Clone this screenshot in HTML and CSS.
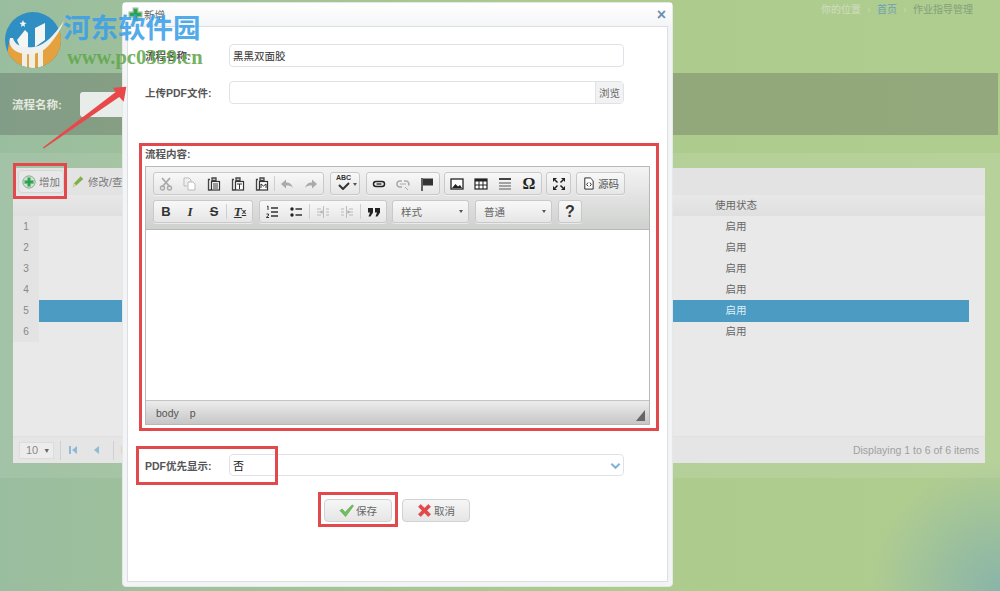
FILE: index.html
```html
<!DOCTYPE html>
<html lang="zh">
<head>
<meta charset="utf-8">
<title>作业指导管理</title>
<link rel="stylesheet" href="styles.css">
</head>
<body>
<svg class="defs" width="0" height="0">
  <defs>
    <symbol id="plus" viewBox="0 0 16 16">
      <path d="M5.5 1.2h5v4.3h4.3v5h-4.3v4.3h-5v-4.3H1.2v-5h4.3z" fill="#2fa84f" stroke="#9ab8a4" stroke-width="1.2"/>
      <path d="M6.8 3.2h2.4v3.6h3.6v2.4H9.2v3.6H6.8V9.2H3.2V6.8h3.6z" fill="#22a648"/>
    </symbol>
    <symbol id="paste" viewBox="0 0 14 14">
      <path d="M3 2.5H1.5v10.5H4M5 1h4v2.500H5z" fill="none" stroke="#444" stroke-width="1.300"/>
      <rect x="4.500" y="4.500" width="8" height="8.500" fill="#fff" stroke="#333" stroke-width="1.200"/>
    </symbol>
    <clipPath id="disc"><circle cx="29" cy="29" r="28"/></clipPath>
  </defs>
</svg>

<header class="topbar">
  <nav class="crumbs">
    <span class="crumb-first">你的位置</span><span class="crumb-sep">›</span><span class="crumb-link">首页</span><span class="crumb-sep">›</span><span class="crumb-last">作业指导管理</span>
  </nav>
</header>

<section class="search-band">
  <span class="search-label">流程名称:</span>
  <span class="search-input"></span>
</section>

<section class="content">
  <div class="panel">
    <div class="panel-tools">
      <span class="tool-btn">
        <svg class="ico16" viewBox="0 0 16 16"><circle cx="8" cy="8" r="7" fill="#d8e8dc" stroke="#6aa67c"/><use href="#plus" x="2" y="2" width="12" height="12"/></svg>增加
      </span>
      <span class="tool-plain">
        <svg class="ico16" viewBox="0 0 16 16"><path d="M2 14l1.500-4.500 7.500-8 3 3-8 7.500z" fill="#7fb04a"/><path d="M2 14l1.500-4.500 3 2.500z" fill="#d9d2a8"/></svg>修改/查看
      </span>
    </div>
    <div class="grid-row grid-head"><span></span><span></span><span class="cell-c">使用状态</span></div>
    <div class="grid-body">
      <div class="grid-row"><span class="num">1</span><span></span><span class="cell-c">启用</span></div>
      <div class="grid-row"><span class="num">2</span><span></span><span class="cell-c">启用</span></div>
      <div class="grid-row"><span class="num">3</span><span></span><span class="cell-c">启用</span></div>
      <div class="grid-row"><span class="num">4</span><span></span><span class="cell-c">启用</span></div>
      <div class="grid-row selected"><span class="num">5</span><span class="sel"></span><span class="cell-c sel">启用</span><span class="sel"></span></div>
      <div class="grid-row"><span class="num">6</span><span></span><span class="cell-c">启用</span></div>
    </div>
    <div class="pager">
      <span class="page-size">10 <i class="tri">▼</i></span>
      <span class="page-sep"></span>
      <svg class="page-ico" viewBox="0 0 12 12"><path d="M2 2h2v8H2zM10 2v8L5 6z" fill="#8fbad6"/></svg>
      <svg class="page-ico" viewBox="0 0 12 12"><path d="M9 2v8L4 6z" fill="#8fbad6"/></svg>
      <span class="page-sep"></span>
      <span class="page-text">Page</span>
      <span class="page-info">Displaying 1 to 6 of 6 items</span>
    </div>
  </div>
</section>

<div class="dialog">
  <div class="dialog-head">
    <svg class="head-ico" viewBox="0 0 16 16"><use href="#plus"/></svg>
    <span class="dialog-title">新增</span>
    <span class="dialog-close">×</span>
  </div>
  <div class="dialog-body">
    <div class="form-row first">
      <label class="form-label">流程名称:</label>
      <span class="field field-text">黑黑双面胶</span>
    </div>
    <div class="form-row second">
      <label class="form-label">上传PDF文件:</label>
      <span class="field field-file"><span class="browse">浏览</span></span>
    </div>

    <div class="mark-box">
      <div class="content-label">流程内容:</div>
      <div class="editor">
        <div class="ed-toolbar">
          <div class="ed-line">
            <div class="ed-group">
              <span class="ed-btn dim"><svg viewBox="0 0 14 14"><path d="M3 1l8 9M11 1L3 10" stroke="#aaa" stroke-width="1.800" fill="none"/><circle cx="3.500" cy="11" r="2" fill="none" stroke="#aaa" stroke-width="1.400"/><circle cx="10.500" cy="11" r="2" fill="none" stroke="#aaa" stroke-width="1.400"/></svg></span>
              <span class="ed-btn dim"><svg viewBox="2 0 14 14"><path d="M3 1h5l2 2v2M3 1v8h3" fill="none" stroke="#bbb"/><path d="M7 5h5l2 2v6H7z" fill="#fff" stroke="#bbb"/></svg></span>
              <span class="ed-btn"><svg viewBox="0 0 14 14"><use href="#paste"/><path d="M6 7h5M6 9h5M6 11h5" stroke="#333"/></svg></span>
              <span class="ed-btn"><svg viewBox="0 0 14 14"><use href="#paste"/><path d="M6 7h5M8.500 7v5" stroke="#333"/></svg></span>
              <span class="ed-btn"><svg viewBox="0 0 14 14"><use href="#paste"/><path d="M6 11V7l2.500 2L11 7v4" fill="none" stroke="#333"/></svg></span>
              <span class="ed-sep"></span>
              <span class="ed-btn dim"><svg viewBox="0 0 14 14"><path d="M1 7l5-4.500v3c4 0 6 2 7 5.500-1.500-2-3.500-2.500-7-2.500v3z" fill="#aaa"/></svg></span>
              <span class="ed-btn dim"><svg viewBox="0 0 14 14"><path d="M13 7L8 2.500v3C4 5.500 2 7.500 1 11c1.500-2 3.500-2.500 7-2.500v3z" fill="#aaa"/></svg></span>
            </div>
            <div class="ed-group">
              <span class="ed-btn wide"><span class="abc">ABC</span><svg class="abc-check" viewBox="0 0 14 8"><path d="M2 3l4 4 6-6" fill="none" stroke="#333" stroke-width="2"/></svg><i class="caret"></i></span>
            </div>
            <div class="ed-group">
              <span class="ed-btn"><svg viewBox="0 0 14 14"><rect x="1.500" y="4.500" width="11" height="5" rx="2.500" fill="none" stroke="#222" stroke-width="1.500"/><path d="M4.500 7h5" stroke="#222" stroke-width="1.300"/></svg></span>
              <span class="ed-btn dim"><svg viewBox="0 0 14 14"><path d="M6 4H4a3 3 0 0 0 0 6h2M8 4h2a3 3 0 0 1 2.500 4.500" fill="none" stroke="#aaa" stroke-width="1.500"/><path d="M4 7h6M9 10l3 3" stroke="#aaa"/></svg></span>
              <span class="ed-btn"><svg viewBox="0 0 14 14"><path d="M2 1v13" stroke="#333" stroke-width="1.500"/><path d="M3 1.500h10v7H3z" fill="#333"/></svg></span>
            </div>
            <div class="ed-group group-tighter">
              <span class="ed-btn"><svg viewBox="0 0 14 14"><rect x="1" y="2" width="12" height="10" fill="#fff" stroke="#222" stroke-width="1.300"/><path d="M2 11l3.500-4 2.500 2.500L10 8l2 3z" fill="#222"/></svg></span>
              <span class="ed-btn"><svg viewBox="0 0 14 14"><rect x="1" y="2" width="12" height="10" fill="#fff" stroke="#222" stroke-width="1.200"/><path d="M1 2h12v2.500H1z" fill="#222"/><path d="M5 4v8M9 4v8M1 8h12" stroke="#222"/></svg></span>
              <span class="ed-btn"><svg viewBox="0 0 14 14"><path d="M1 2h12" stroke="#444" stroke-width="2"/><path d="M1 6h12M1 9h12M1 12h12" stroke="#888" stroke-width="1.300"/></svg></span>
              <span class="ed-btn omega">Ω</span>
            </div>
            <div class="ed-group group-tighter">
              <span class="ed-btn narrow"><svg viewBox="0 0 14 14"><path d="M1 1h4L1 5zM13 1v4L9 1zM1 13V9l4 4zM13 13H9l4-4z" fill="#222"/><path d="M3 3l2.500 2.500M11 3L8.500 5.500M3 11l2.500-2.500M11 11L8.500 8.500" stroke="#222" stroke-width="1.500"/></svg></span>
            </div>
            <div class="ed-group group-tight">
              <span class="ed-source"><svg viewBox="0 0 14 14"><path d="M3 1h6l3 3v9H3z" fill="#fff" stroke="#222"/><path d="M6.500 6L5 8l1.500 2M8.500 6L10 8l-1.500 2" fill="none" stroke="#222"/></svg>源码</span>
            </div>
          </div>
          <div class="ed-line">
            <div class="ed-group">
              <span class="ed-btn glyph-b">B</span>
              <span class="ed-btn glyph-i">I</span>
              <span class="ed-btn glyph-s">S</span>
              <span class="ed-sep pad"></span>
              <span class="ed-btn glyph-tx">T<sub>x</sub></span>
            </div>
            <div class="ed-group">
              <span class="ed-btn"><svg viewBox="0 0 14 14"><path d="M6 3h7M6 7h7M6 11h7" stroke="#333" stroke-width="1.500"/><path d="M2 1.500l1-.5v4" fill="none" stroke="#333"/><path d="M1.500 9h2v1.500l-2 1.500v.5h2.500" fill="none" stroke="#333"/></svg></span>
              <span class="ed-btn"><svg viewBox="0 0 14 14"><circle cx="3" cy="4" r="1.700" fill="#222"/><circle cx="3" cy="10" r="1.700" fill="#222"/><path d="M6.500 4H13M6.500 10H13" stroke="#333" stroke-width="1.600"/></svg></span>
              <span class="ed-sep spaced"></span>
              <span class="ed-btn dim"><svg viewBox="0 0 14 14"><path d="M1 4h4M1 7h4M1 10h4M10 4h3M10 7h3M10 10h3M7.500 1v12" stroke="#bbb"/><path d="M6.500 5v4L4 7z" fill="#aaa"/></svg></span>
              <span class="ed-btn dim"><svg viewBox="0 0 14 14"><path d="M1 4h3M1 7h3M1 10h3M9 4h4M9 7h4M9 10h4M6.500 1v12" stroke="#bbb"/><path d="M7.500 5v4l2.500-2z" fill="#aaa"/></svg></span>
              <span class="ed-sep spaced"></span>
              <span class="ed-btn"><svg viewBox="0 0 14 14"><path d="M1 3h5v4.500L3.500 11.500H1.500L3 7.500H1zM8 3h5v4.500L10.500 11.500H8.500L10 7.500H8z" fill="#222"/></svg></span>
            </div>
            <div class="ed-group ed-select sel-a"><span>样式</span><i class="caret"></i></div>
            <div class="ed-group ed-select sel-b"><span>普通</span><i class="caret"></i></div>
            <div class="ed-group ed-help">?</div>
          </div>
        </div>
        <div class="ed-area"></div>
        <div class="ed-foot"><span>body</span><span>p</span><i class="resize"></i></div>
      </div>
    </div>

    <div class="form-row third">
      <label class="form-label">PDF优先显示:</label>
      <span class="field field-combo">否
        <svg class="combo-arrow" viewBox="0 0 12 8"><path d="M1.500 1.500L6 6l4.500-4.500" fill="none" stroke="#7fb4da" stroke-width="2.200"/></svg>
      </span>
    </div>

    <div class="actions">
      <span class="act-btn act-save"><svg viewBox="0 0 16 16"><path d="M1 8l2.500-1.500L6.500 10 14 2l1.500 1L7 14.500z" fill="#6fc15a" stroke="#4f9a45" stroke-width=".6"/></svg>保存</span>
      <span class="act-btn act-cancel"><svg viewBox="0 0 16 16"><path d="M1.500 4L4 1.500l4 4 4-4L14.500 4l-4 4 4 4-2.500 2.500-4-4-4 4L1.500 12l4-4z" fill="#e8474a" stroke="#b83a3c" stroke-width=".5"/></svg>取消</span>
    </div>

    <span class="mark mark-pdf"></span>
    <span class="mark mark-save"></span>
  </div>
</div>

<span class="mark mark-add"></span>

<svg class="arrow" viewBox="0 0 100 80"><path d="M2 70.500L84 8 81 3 96 2 93 19 88 13.500 3 71.500z" fill="#e9484b"/></svg>

<div class="watermark">
  <svg class="wm-logo" viewBox="0 0 60 60">
    <g clip-path="url(#disc)">
      <rect width="60" height="60" fill="#2f8fc3"/>
      <path d="M6 27C14 44 38 46 59 11L60 60H0z" fill="#e5a13e"/>
      <path d="M18 40h5v20h-5zM25 40h6v20h-6zM34 38h5v22h-5z" fill="#eef0e8"/>
    </g>
    <path d="M6 27C4 34 9 40 16 42c10 3 22 1 30-9C52 26 57 18 60 10 50 24 42 34 30 36 20 37 11 35 9 27z" fill="#eef1ee"/>
    <path d="M13 29l8-10 3 3v14h-8z" fill="#f4f6f4"/>
    <path d="M31 36V17l10-5v17z" fill="#f4f6f4"/>
    <path d="M19 9l1 2.500 2.500.5-2 1.500.5 2.500-2-1.500-2 1.500.5-2.500-2-1.500 2.500-.5z" fill="#f4f4f4"/>
  </svg>
  <div class="wm-cn">河东软件园</div>
  <div class="wm-url">www.pc0359.cn</div>
</div>
</body>
</html>
```
FILE: styles.css
```css
* { box-sizing: border-box; }
html, body { height: 100%; }
body {
  margin: 0;
  width: 1000px;
  height: 591px;
  overflow: hidden;
  position: relative;
  font-family: "Liberation Sans", "Noto Sans CJK SC", sans-serif;
  font-size: 10.5px;
  color: #555;
  background:
    radial-gradient(circle at 100% 100%, #89b4a9 0, rgba(137,180,169,0) 130px),
    linear-gradient(90deg, #99bd9f 0, #a2c298 25%, #aecb8e 60%, #b0cd90 100%);
}
.defs { position: absolute; }
.topbar { height: 73px; display: flex; justify-content: flex-end; padding: 3px 27px 0 0; }
.crumbs { display: flex; height: 13px; line-height: 13px; font-size: 10px; }
.crumb-first { color: #cfdcc0; }
.crumb-link { color: #6d9fb2; }
.crumb-last { color: #81a07a; }
.crumb-sep { color: #c8d8b8; width: 16px; text-align: center; }

.search-band {
  height: 62px;
  margin-right: 2px;
  background: rgba(72,72,72,.27);
  display: flex;
  align-items: center;
  padding-left: 12px;
}
.search-label { color: #e3e9de; font-weight: bold; font-size: 11.500px; width: 68px; }
.search-input { width: 50px; height: 25px; background: #e9edea; border-radius: 3px; }

.content {
  margin-top: 18px;
  height: 325px;
  padding: 15px 15px 0 13px;
  background: rgba(255,255,255,.09);
}
.panel { height: 295px; background: #e9e9e9; display: flex; flex-direction: column; }
.panel-tools { height: 27px; background: #e3e3e3; display: flex; align-items: center; padding-left: 5px; gap: 7px; flex: none; }
.tool-btn, .tool-plain { display: flex; align-items: center; gap: 3px; height: 23px; color: #777; font-size: 10.500px; }
.tool-btn { width: 46px; padding-left: 3px; border: 1px solid #d6d6d6; border-radius: 4px; background: #e8e8e8; }
.tool-plain { white-space: nowrap; }
.ico16 { width: 14px; height: 14px; flex: none; }

.grid-row { display: grid; grid-template-columns: 26px 665px 64px 201px 1fr; height: 21px; line-height: 21px; color: #666; }
.grid-head { background: linear-gradient(#e8e8e8, #dfdfdf); flex: none; }
.grid-body { flex: 1; }
.num { background: #e3e3e3; text-align: center; color: #888; font-size: 10px; }
.cell-c { text-align: center; }
.selected .sel { background: #4b9bc3; color: #dff0f8; }
.selected .num { border-bottom: 1px solid #6fa8c8; }

.pager { height: 27px; background: #e5e5e5; border-top: 1px solid #e0e0e0; display: flex; align-items: center; padding: 0 6px 0 6px; flex: none; color: #999; }
.page-size { width: 35px; height: 17px; line-height: 15px; padding-left: 6px; border: 1px solid #dcdcdc; background: #ececec; font-size: 11px; color: #888; margin-right: 6px; }
.tri { font-style: normal; font-size: 7px; color: #666; margin-left: 2px; vertical-align: 1px; }
.page-sep { width: 1px; height: 19px; background: #d0d0d0; margin-right: 6px; }
.page-ico { width: 12px; height: 12px; margin-right: 11px; }
.page-text { font-size: 11px; color: #888; margin-left: 1px; }
.page-info { margin-left: auto; font-size: 10.500px; color: #a0a0a0; }

.dialog {
  position: absolute;
  left: 122px;
  top: 2px;
  width: 551px;
  height: 585px;
  background: #f3f4f6;
  border: 1px solid #e5e8e8;
  border-radius: 4px;
  padding: 0 4px 4px;
  display: flex;
  flex-direction: column;
}
.dialog-head { height: 23px; display: flex; align-items: center; flex: none; position: relative; background: linear-gradient(#fff, #f4f5f7); margin: 0 -4px; padding-left: 5px; }
.head-ico { width: 15px; height: 15px; }
.dialog-title { color: #666; font-size: 10.500px; margin-left: 1px; }
.dialog-close { margin-left: auto; margin-right: 6px; color: #6f8fb0; font-size: 16px; font-weight: bold; line-height: 16px; }
.dialog-body { flex: 1; background: #fff; border: 1px solid #dcdfe2; position: relative; }

.form-row { display: flex; align-items: center; padding-left: 17px; }
.form-row.first { margin-top: 17px; height: 23px; }
.form-row.second { margin-top: 14px; height: 23px; }
.form-row.third { margin-top: 23px; height: 22px; }
.form-label { width: 84px; font-weight: bold; color: #555; font-size: 10.500px; flex: none; white-space: nowrap; }
.field { width: 395px; height: 100%; border: 1px solid #dfe3e8; border-radius: 4px; background: #fff; color: #333; display: flex; align-items: center; padding-left: 3px; font-size: 10.500px; position: relative; }
.field-file { justify-content: flex-end; padding: 0; }
.browse { width: 28px; height: 100%; border-left: 1px solid #dfe3e8; background: #f2f2f2; color: #666; display: flex; align-items: center; justify-content: center; font-size: 10.500px; }
.field-combo { font-size: 11px; color: #222; }
.combo-arrow { position: absolute; right: 2px; top: 7px; width: 11px; height: 8px; }

.mark-box { margin: 39px 0 0 11px; width: 520px; height: 288px; border: 3px solid #e2494c; padding: 3px; }
.content-label { font-weight: bold; color: #555; height: 17px; line-height: 10px; padding-left: 0; }
.editor { border: 1px solid #b8b8b8; width: 505px; height: 259px; display: flex; flex-direction: column; }
.ed-toolbar { height: 63px; background: linear-gradient(#f3f3f3, #cfd1cf); border-bottom: 1px solid #b8b8b8; padding: 5px 0 0 7px; display: flex; flex-direction: column; gap: 5px; flex: none; }
.ed-line { display: flex; gap: 6px; height: 23px; }
.ed-group { display: flex; align-items: center; height: 23px; border: 1px solid #c9c9c9; border-radius: 3px; background: linear-gradient(#f8f8f8, #e6e6e6); box-shadow: 0 1px 0 rgba(255,255,255,.5); }
.group-tight { margin-left: -1px; }
.group-tighter { margin-left: -2px; }
.ed-btn { width: 24px; height: 21px; display: flex; align-items: center; justify-content: center; color: #333; position: relative; }
.ed-btn svg { width: 14px; height: 14px; }
.ed-btn.narrow { width: 23px; }
.ed-sep { width: 1px; height: 15px; background: #cfcfcf; }
.ed-sep.spaced { margin: 0 1px; }
.ed-sep.pad { margin-right: 1px; }
.ed-btn.wide { width: 28px; }
.abc { position: absolute; left: 5px; top: 1px; font-size: 7px; font-weight: bold; color: #333; }
.ed-btn svg.abc-check { position: absolute; left: 6px; top: 9px; width: 14px; height: 8px; }
.caret { width: 0; height: 0; border: 2.500px solid transparent; border-top: 3px solid #555; border-bottom: 0; }
.ed-btn.wide .caret { position: absolute; right: 2px; top: 10px; }
.omega { font-family: "Liberation Serif", serif; font-size: 16px; font-weight: bold; color: #222; }
.ed-source { width: 47px; height: 21px; display: flex; align-items: center; justify-content: center; gap: 3px; color: #555; font-size: 10.500px; }
.ed-source svg { width: 13px; height: 13px; }
.glyph-b, .glyph-i, .glyph-s { font-family: "Liberation Sans", sans-serif; font-weight: bold; font-size: 13px; color: #333; }
.glyph-i { font-family: "Liberation Serif", serif; font-style: italic; }
.glyph-s { text-decoration: line-through; }
.glyph-tx { font-family: "Liberation Serif", serif; font-style: italic; font-weight: bold; font-size: 13px; text-decoration: underline; color: #333; }
.glyph-tx sub { font-size: 8px; font-style: normal; font-family: "Liberation Sans", sans-serif; }
.ed-select { justify-content: space-between; padding: 0 5px 0 8px; color: #666; font-size: 10.500px; }
.sel-a { margin-left: -1px; width: 77px; }
.sel-b { width: 77px; }
.ed-help { width: 24px; justify-content: center; font-weight: bold; font-size: 16px; color: #333; }
.ed-area { flex: 1; background: #fff; }
.ed-foot { height: 24px; background: linear-gradient(#ececec, #c6c6c6); border-top: 1px solid #c4c4c4; display: flex; align-items: center; gap: 11px; padding: 0 4px 0 10px; color: #555; font-size: 10.500px; flex: none; }
.resize { margin-left: auto; width: 0; height: 0; border-left: 9px solid transparent; border-bottom: 11px solid #666; margin-top: 6px; }

.actions { display: flex; justify-content: flex-start; gap: 10px; margin: 23px 0 0 196px; }
.act-btn { width: 68px; height: 23px; border: 1px solid #cfd3d3; border-radius: 4px; background: linear-gradient(#f6f6f6, #e6e6e6); display: flex; align-items: center; justify-content: center; gap: 2px; color: #666; font-size: 10.500px; }
.act-btn svg { width: 15px; height: 15px; }

.mark { position: absolute; border: 3px solid #e2494c; }
.mark-pdf { left: 8px; top: 419px; width: 142px; height: 39px; }
.mark-save { left: 190px; top: 465px; width: 80px; height: 35px; }
.mark-add { left: 13px; top: 163px; width: 54px; height: 36px; }

.arrow { position: absolute; left: 41px; top: 85px; width: 89px; height: 71px; }

.watermark { position: absolute; left: 4px; top: 11px; width: 200px; height: 58px; pointer-events: none; }
.wm-logo { position: absolute; left: 0; top: 0; width: 60px; height: 60px; }
.wm-cn { position: absolute; left: 59px; top: 2px; font-family: "Liberation Serif", "Noto Sans CJK SC", serif; font-weight: bold; font-size: 27.500px; line-height: 32px; color: rgba(59,160,232,.88); white-space: nowrap; }
.wm-url { position: absolute; left: 63px; top: 35px; font-family: "Liberation Serif", serif; font-weight: bold; font-size: 20.500px; line-height: 22px; color: rgba(98,168,76,.9); white-space: nowrap; }
```
